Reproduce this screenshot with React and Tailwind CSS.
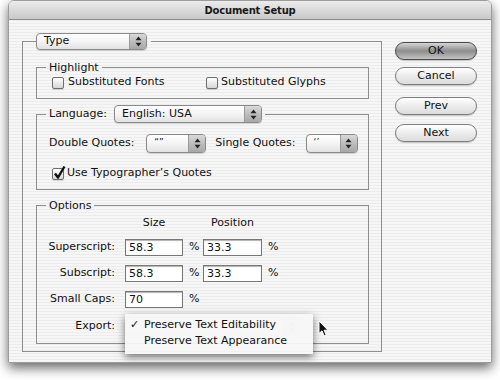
import React from 'react';

const stripes = 'bg-[repeating-linear-gradient(180deg,#ececec_0px,#ececec_1px,#f6f6f6_1px,#f6f6f6_3px)]';

function Arrows() {
  return (
    <svg width="7" height="11" viewBox="0 0 7 11">
      <path d="M3.5 0.5 L6.5 4.2 L0.5 4.2 Z" fill="#222" />
      <path d="M3.5 10.5 L6.5 6.8 L0.5 6.8 Z" fill="#222" />
    </svg>
  );
}

function Popup({ width, label, height = 'h-[18px]', small }) {
  return (
    <div className={`flex ${height} ${width} rounded-[4px] border border-[#8a8a8a] bg-gradient-to-b from-white via-[#f4f4f4] to-[#e2e2e2] shadow-[0_1px_1px_rgba(0,0,0,0.15)] overflow-hidden`}>
      <div className={`flex-1 flex items-center pl-[7px] ${small ? 'text-[9px] pt-[1px] items-start' : ''} text-[#111]`}>{label}</div>
      <div className="w-[17px] flex items-center justify-center border-l border-[#9a9a9a] bg-gradient-to-b from-[#d9d9d9] via-[#bdbdbd] to-[#a8a8a8]">
        <Arrows />
      </div>
    </div>
  );
}

function Checkbox({ checked }) {
  return (
    <span className="relative inline-block w-[12px] h-[12px] rounded-[2px] border border-[#6e6e6e] bg-gradient-to-b from-white to-[#d6d6d6] shadow-[0_1px_1px_rgba(0,0,0,0.15)]">
      {checked && (
        <svg className="absolute left-[0px] top-[-4px]" width="13" height="15" viewBox="0 0 13 15">
          <path d="M2 8.5 L5 12.5 L11.5 1.5" fill="none" stroke="#111" strokeWidth="2.4" strokeLinejoin="round" />
        </svg>
      )}
    </span>
  );
}

function Button({ children, def, className = '' }) {
  const look = def
    ? 'border-[#4a4a4a] bg-gradient-to-b from-[#d6d6d6] via-[#8d8d8d] to-[#c4c4c4]'
    : 'border-[#7d7d7d] bg-gradient-to-b from-white via-[#ececec] to-[#dcdcdc]';
  return (
    <div className={`h-[18px] w-[82px] rounded-full border ${look} flex items-center justify-center text-[#111] shadow-[0_1px_1px_rgba(0,0,0,0.2)] ${className}`}>
      {children}
    </div>
  );
}

function Field({ value }) {
  return (
    <div className="h-[17px] border border-[#777] bg-white shadow-[inset_0_1px_1px_rgba(0,0,0,0.3)] pl-[3px] leading-[15px] text-[#111]">
      {value}
    </div>
  );
}

export default function App() {
  return (
    <div className="w-[500px] h-[380px] bg-white pl-[8px] text-[11px] text-[#111]" style={{ fontFamily: '"DejaVu Sans", Verdana, sans-serif' }}>
      <div className="w-[484px] h-[363px] rounded-t-[6px] border border-[#9c9c9c] shadow-[0_5px_12px_rgba(0,0,0,0.6)] overflow-hidden flex flex-col">
        {/* title bar */}
        <div className="h-[19px] shrink-0 border-b border-[#8c8c8c] bg-gradient-to-b from-[#ececec] via-[#dadada] to-[#c9c9c9] flex items-center justify-center">
          <span className="font-bold text-[10px] tracking-[-0.2px] text-[#1a1a1a]">Document Setup</span>
        </div>

        <div className={`flex-1 flex pt-[13px] pl-[13px] pr-[14px] ${stripes}`}>
          {/* main group */}
          <fieldset className="w-[360px] h-[319px] border border-[#8e8e8e] pl-[13px] pr-[12px]">
            <legend className="pr-[4px]">
              <Popup width="w-[111px]" height="h-[17px]" label="Type" />
            </legend>

            <fieldset className="mt-[10px] border border-[#8e8e8e] px-[9px] pb-[8px]">
              <legend className="px-[3px] leading-[15px]">Highlight</legend>
              <div className="flex items-center h-[15px] pl-[6px]">
                <Checkbox />
                <span className="ml-[4px] w-[138px]">Substituted Fonts</span>
                <Checkbox />
                <span className="ml-[3px]">Substituted Glyphs</span>
              </div>
            </fieldset>

            <fieldset className="mt-[6px] border border-[#8e8e8e] px-[9px] pb-[8px]">
              <legend className="px-[3px] flex items-center">
                <span className="mr-[7px]">Language:</span>
                <Popup width="w-[148px]" label="English: USA" />
              </legend>
              <div className="mt-[11px] flex items-center h-[19px] pl-[3px]">
                <span>Double Quotes:</span>
                <div className="ml-[12px]"><Popup width="w-[60px]" height="h-[19px]" label={'\u201C\u201D'} small /></div>
                <span className="ml-[9px]">Single Quotes:</span>
                <div className="ml-[10px]"><Popup width="w-[52px]" height="h-[19px]" label={'\u2018\u2019'} small /></div>
              </div>
              <div className="mt-[13px] flex items-center h-[15px] pl-[6px]">
                <Checkbox checked />
                <span className="ml-[3px]">Use Typographer’s Quotes</span>
              </div>
            </fieldset>

            <fieldset className="mt-[8px] border border-[#8e8e8e] px-[9px] pb-[9px]">
              <legend className="px-[3px] leading-[15px]">Options</legend>
              <div className="grid grid-cols-[79px_58px_20px_59px_1fr] gap-y-[9px] items-center">
                <div className="h-[15px]" />
                <div className="text-center leading-[15px] pt-[2px]">Size</div>
                <div />
                <div className="text-center leading-[15px] pt-[2px]">Position</div>
                <div />

                <div className="text-right pr-[10px]">Superscript:</div>
                <Field value="58.3" />
                <div className="pl-[6px]">%</div>
                <Field value="33.3" />
                <div className="pl-[6px]">%</div>

                <div className="text-right pr-[10px]">Subscript:</div>
                <Field value="58.3" />
                <div className="pl-[6px]">%</div>
                <Field value="33.3" />
                <div className="pl-[6px]">%</div>

                <div className="text-right pr-[10px]">Small Caps:</div>
                <Field value="70" />
                <div className="pl-[6px]">%</div>
                <div />
                <div />

                <div className="text-right pr-[10px] leading-[17px]">Export:</div>
                <div className="col-span-4 relative h-[17px]">
                  <div className="opacity-40">
                    <Popup width="w-[175px]" label="" />
                  </div>
                  <div className="absolute left-0 top-[-3px] w-[188px] h-[40px] bg-[#f7f7f7]/95 shadow-[0_3px_8px_rgba(0,0,0,0.55)] pt-[3px] z-10">
                    <div className="relative pl-[19px] leading-[16px]">
                      <span className="absolute left-[5px]">✓</span>
                      Preserve Text Editability
                    </div>
                    <div className="pl-[19px] leading-[16px]">Preserve Text Appearance</div>
                  </div>
                  <svg className="absolute left-[193px] top-[3px] z-20" width="11" height="17" viewBox="0 0 11 17">
                    <path d="M1 1 L1 13.5 L4 10.8 L6.2 15.8 L8.2 15 L6.1 10.2 L10 10.2 Z" fill="#111" stroke="#fff" strokeWidth="1" strokeLinejoin="round" />
                  </svg>
                </div>
              </div>
            </fieldset>
          </fieldset>

          {/* buttons */}
          <div className="ml-auto flex flex-col pt-[9px]">
            <Button def>OK</Button>
            <Button className="mt-[7px]">Cancel</Button>
            <Button className="mt-[12px]">Prev</Button>
            <Button className="mt-[9px]">Next</Button>
          </div>
        </div>
      </div>
    </div>
  );
}
